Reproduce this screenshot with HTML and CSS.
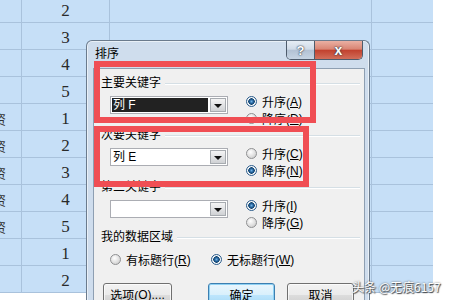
FILE: index.html
```html
<!DOCTYPE html>
<html lang="zh-CN">

<head>
  <meta charset="UTF-8">
  <title>排序</title>
  <link rel="stylesheet" href="styles.css">
</head>

<body>
  <!-- planilha atras do dialogo -->
  <div class="sheet">
    <div class="row"><div class="c-a"></div><div class="c-b">2</div><div class="c-c"></div><div class="c-d"></div></div>
    <div class="row"><div class="c-a"></div><div class="c-b">3</div><div class="c-c"></div><div class="c-d"></div></div>
    <div class="row"><div class="c-a"></div><div class="c-b">4</div><div class="c-c"></div><div class="c-d"></div></div>
    <div class="row"><div class="c-a"></div><div class="c-b">5</div><div class="c-c"></div><div class="c-d"></div></div>
    <div class="row"><div class="c-a">资</div><div class="c-b">1</div><div class="c-c"></div><div class="c-d"></div></div>
    <div class="row"><div class="c-a">资</div><div class="c-b">2</div><div class="c-c"></div><div class="c-d"></div></div>
    <div class="row"><div class="c-a">资</div><div class="c-b">3</div><div class="c-c"></div><div class="c-d"></div></div>
    <div class="row"><div class="c-a">资</div><div class="c-b">4</div><div class="c-c"></div><div class="c-d"></div></div>
    <div class="row"><div class="c-a">资</div><div class="c-b">5</div><div class="c-c"></div><div class="c-d"></div></div>
    <div class="row"><div class="c-a"></div><div class="c-b">1</div><div class="c-c"></div><div class="c-d"></div></div>
    <div class="row"><div class="c-a"></div><div class="c-b">2</div><div class="c-c"></div><div class="c-d"></div></div>
  </div>

  <div class="dialog">
    <div class="titlebar">
      <span class="title">排序</span>
      <div class="caption-btns">
        <span class="cap help">?</span>
        <span class="cap close">x</span>
      </div>
    </div>
    <div class="client">
      <div class="group">
        <div class="group-head"><span>主要关键字</span><i class="rule"></i></div>
        <div class="group-body">
          <div class="combo selected"><span class="combo-text">列 F</span><span class="combo-btn"></span></div>
          <div class="radios">
            <label class="radio checked"><i></i>升序(<u>A</u>)</label>
            <label class="radio"><i></i>降序(<u>D</u>)</label>
          </div>
        </div>
      </div>
      <div class="group">
        <div class="group-head"><span>次要关键字</span><i class="rule"></i></div>
        <div class="group-body">
          <div class="combo"><span class="combo-text">列 E</span><span class="combo-btn"></span></div>
          <div class="radios">
            <label class="radio"><i></i>升序(<u>C</u>)</label>
            <label class="radio checked"><i></i>降序(<u>N</u>)</label>
          </div>
        </div>
      </div>
      <div class="group">
        <div class="group-head"><span>第三关键字</span><i class="rule"></i></div>
        <div class="group-body">
          <div class="combo"><span class="combo-text"></span><span class="combo-btn"></span></div>
          <div class="radios">
            <label class="radio checked"><i></i>升序(<u>I</u>)</label>
            <label class="radio"><i></i>降序(<u>G</u>)</label>
          </div>
        </div>
      </div>
      <div class="group data">
        <div class="group-head"><span>我的数据区域</span><i class="rule"></i></div>
        <div class="data-row">
          <label class="radio first"><i></i>有标题行(<u>R</u>)</label>
          <label class="radio checked"><i></i>无标题行(<u>W</u>)</label>
        </div>
      </div>
      <div class="buttons">
        <span class="btn btn-opt">选项(<u>O</u>)....</span>
        <span class="btn btn-ok">确定</span>
        <span class="btn btn-cancel">取消</span>
      </div>
    </div>
  </div>

  <!-- marcacoes vermelhas por cima -->
  <div class="mark mark-1"></div>
  <div class="mark mark-2"></div>

  <div class="watermark">头条 @无痕6157</div>
</body>

</html>
```

FILE: styles.css
```css
body {
  margin: 0;
  width: 450px;
  height: 300px;
  overflow: hidden;
  position: relative;
  background: #fff;
  font-family: "Liberation Sans", "Noto Sans CJK SC", sans-serif;
}

/* planilha */
.sheet {
  width: 433px;
  margin-top: -4px;
  background: #c6dff7;
}

.row {
  display: flex;
  height: 27px;
  box-sizing: border-box;
  border-bottom: 1px solid #a9c2dc;
}

.row > div {
  box-sizing: border-box;
  border-right: 1px solid #a9c2dc;
  overflow: hidden;
  display: flex;
  align-items: center;
  padding-top: 3px;
}

.c-a {
  width: 22px;
  justify-content: flex-end;
  padding-right: 15px;
  font-family: "Noto Sans CJK SC", sans-serif;
  font-size: 13px;
  color: #333;
}

.c-b {
  width: 88px;
  justify-content: center;
  font-family: "Liberation Serif", serif;
  font-size: 17px;
  color: #2a2a2a;
}

.c-c {
  width: 262px;
}

.c-d {
  flex: 1;
  border-right: none !important;
}

/* dialogo */
.dialog {
  position: absolute;
  left: 86px;
  top: 40px;
  width: 284px;
  height: 265px;
  box-sizing: border-box;
  background: #cfdded;
  border: 1px solid #6b7b8d;
  border-bottom: none;
  border-radius: 6px 6px 0 0;
  box-shadow: inset 0 0 0 1px rgba(255, 255, 255, 0.55);
}

.titlebar {
  display: flex;
  align-items: flex-start;
  height: 27px;
}

.title {
  font-size: 12px;
  line-height: 14px;
  margin: 6px 0 0 8px;
  color: #000;
}

.caption-btns {
  display: flex;
  margin-left: auto;
  margin-right: 6px;
  height: 18px;
  border: 1px solid #4e5b6b;
  border-top: none;
  border-radius: 0 0 5px 5px;
  overflow: hidden;
}

.cap {
  display: flex;
  align-items: center;
  justify-content: center;
  color: #fff;
  font-weight: bold;
  font-size: 13px;
  text-shadow: 0 0 2px #2c3644, 0 0 1px #2c3644;
}

.help {
  width: 27px;
  border-right: 1px solid #4e5b6b;
  background: linear-gradient(#e6edf5, #d0dbe8 45%, #b3c2d4 52%, #c6d4e3);
}

.close {
  width: 47px;
  font-size: 14px;
  background: linear-gradient(#eab0a3, #d98574 45%, #c2422f 52%, #d26e5a);
}

.client {
  margin: 0 4px 0 6px;
  height: 238px;
  box-sizing: border-box;
  background: #f0f0f0;
  border: 1px solid #8e9fb2;
  border-bottom: none;
  padding: 7px 4px 0 7px;
  font-size: 12px;
  color: #000;
}

.group {
  margin-bottom: 1px;
}

.group-head {
  display: flex;
  align-items: center;
  height: 15px;
  line-height: 15px;
}

.rule {
  flex: 1;
  margin-left: 4px;
  border-top: 1px solid #d5dfe5;
  border-bottom: 1px solid #fff;
}

.group-body {
  display: flex;
  margin-top: 2px;
  padding-left: 9px;
}

.combo {
  display: flex;
  width: 118px;
  height: 18px;
  margin-top: 3px;
  box-sizing: border-box;
  border: 1px solid #abadb3;
  background: #fff;
}

.combo-text {
  flex: 1;
  margin: 1px;
  padding-left: 1px;
  line-height: 14px;
}

.combo.selected .combo-text {
  background: #222;
  color: #fff;
}

.combo-btn {
  width: 16px;
  margin: 1px;
  box-sizing: border-box;
  border: 1px solid #a7abb0;
  background: linear-gradient(#f4f4f4, #e2e3e5 50%, #cfd1d4);
  display: flex;
  align-items: center;
  justify-content: center;
}

.combo-btn::after {
  content: "";
  border-left: 4px solid transparent;
  border-right: 4px solid transparent;
  border-top: 4px solid #111;
  margin-top: 1px;
}

.radios {
  display: flex;
  flex-direction: column;
  margin-left: 18px;
}

.radio {
  display: flex;
  align-items: center;
  height: 17px;
  white-space: nowrap;
}

.radio i {
  width: 11px;
  height: 11px;
  box-sizing: border-box;
  border-radius: 50%;
  border: 1px solid #8f9092;
  background: radial-gradient(circle at 40% 35%, #ffffff, #dcdcdc 60%, #c4c4c4);
  margin-right: 5px;
}

.radio.checked i {
  border-color: #2c5d8c;
  background: radial-gradient(circle, #6fb2e6 0, #1f5c94 2px, #16466f 3px, #ffffff 3.5px, #dfe6ec 5px);
}

.radio u,
.btn u {
  text-decoration: underline;
}

.data {
  margin-top: -2px;
}

.data-row {
  display: flex;
  margin-top: 6px;
  padding-left: 9px;
}

.radio.first {
  width: 101px;
}

.buttons {
  display: flex;
  margin-top: 15px;
  padding-left: 2px;
}

.btn {
  display: flex;
  align-items: center;
  justify-content: center;
  height: 23px;
  box-sizing: border-box;
  border: 1px solid #707070;
  border-radius: 3px;
  background: linear-gradient(#f2f2f2, #ebebeb 50%, #dddddd 51%, #cfcfcf);
  box-shadow: inset 0 0 0 1px rgba(255, 255, 255, 0.7);
}

.btn-opt {
  width: 69px;
}

.btn-ok {
  width: 67px;
  margin-left: 36px;
  border-color: #3c7fb1;
  background: linear-gradient(#eaf6fd, #d9f0fc 50%, #bee6fd 51%, #a7d9f5);
  box-shadow: inset 0 0 0 1px #8fd1f3;
}

.btn-cancel {
  width: 67px;
  margin-left: 12px;
}

/* marcacao vermelha */
.mark {
  position: absolute;
  box-sizing: border-box;
  border: 6px solid #f04e54;
}

.mark-1 {
  left: 94px;
  top: 61px;
  width: 222px;
  height: 62px;
}

.mark-2 {
  left: 94px;
  top: 126px;
  width: 215px;
  height: 61px;
}

.watermark {
  position: absolute;
  left: 352px;
  top: 278px;
  font-family: "Noto Sans CJK SC", sans-serif;
  font-size: 12px;
  color: #fff;
  text-shadow: 0 0 2px #555, 1px 1px 1px #444;
}
```
